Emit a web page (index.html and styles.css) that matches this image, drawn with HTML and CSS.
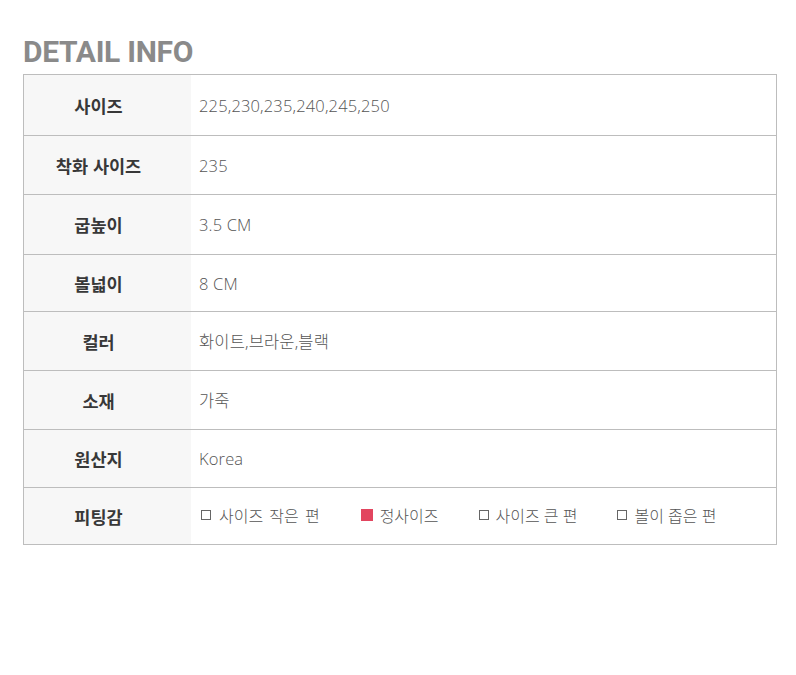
FILE: index.html
```html
<!DOCTYPE html>
<html lang="ko">
<head>
<meta charset="utf-8">
<link rel="stylesheet" href="styles.css">
</head>
<body>
<div class="page">
  <h2 class="title">DETAIL INFO</h2>
  <div class="info">
    <div class="row"><div class="label">사이즈</div><div class="value">225,230,235,240,245,250</div></div>
    <div class="row"><div class="label">착화 사이즈</div><div class="value">235</div></div>
    <div class="row"><div class="label">굽높이</div><div class="value">3.5 CM</div></div>
    <div class="row"><div class="label">볼넓이</div><div class="value">8 CM</div></div>
    <div class="row"><div class="label">컬러</div><div class="value">화이트,브라운,블랙</div></div>
    <div class="row"><div class="label">소재</div><div class="value">가죽</div></div>
    <div class="row"><div class="label">원산지</div><div class="value">Korea</div></div>
    <div class="row"><div class="label">피팅감</div>
      <div class="value fit">
        <span class="opt"><i class="box"></i>사이즈 작은 편</span>
        <span class="opt on"><i class="box"></i>정사이즈</span>
        <span class="opt"><i class="box"></i>사이즈 큰 편</span>
        <span class="opt"><i class="box"></i>볼이 좁은 편</span>
      </div>
    </div>
  </div>
</div>
</body>
</html>
```

FILE: styles.css
```css
html, body { margin: 0; padding: 0; background: #fff; }
.page { padding: 35px 19px 0 23px; }
.title {
  margin: 0 0 6px 0;
  font-family: Roboto, "Noto Sans", sans-serif;
  font-weight: 700;
  font-size: 30px;
  line-height: 33px;
  letter-spacing: -0.3px;
  color: #8a8a8a;
}
.info {
  border: 1px solid #bdbdbd;
  border-bottom: none;
  width: 752px;
}
.row {
  display: flex;
  border-bottom: 1px solid #bdbdbd;
  height: 58px;
}
.row:nth-child(1) { height: 60px; }
.row:nth-child(3) { height: 59px; }
.row:nth-child(4) { height: 56px; }
.row:nth-child(7) { height: 57px; }
.row:nth-child(8) { height: 56px; }
.label {
  width: 149px;
  padding-right: 18px;
  background: #f7f7f7;
  display: flex;
  align-items: center;
  justify-content: center;
  font-family: "Noto Sans CJK KR", sans-serif;
  font-weight: 700;
  font-size: 17.5px;
  color: #383838;
}
.value {
  flex: 1;
  display: flex;
  align-items: center;
  padding-left: 8px;
  font-family: "Open Sans", "Noto Sans CJK KR", sans-serif;
  font-weight: 300;
  font-size: 16.5px;
  letter-spacing: 0.15px;
  color: #555;
}
.fit { padding-left: 10px; padding-bottom: 2px; font-size: 16px; letter-spacing: 0; }
.opt { display: inline-flex; align-items: center; margin-right: 40px; }
.opt:first-child { margin-right: 41px; }
.opt:first-child .box { margin-right: 8px; }
.opt:first-child { word-spacing: 2px; }
.box {
  display: inline-block;
  width: 8px; height: 8px;
  border: 1px solid #666;
  margin-right: 7px;
}
.opt.on .box { background: #e2455f; border-color: #e2455f; width: 10px; height: 10px; margin-right: 7px; }
```
